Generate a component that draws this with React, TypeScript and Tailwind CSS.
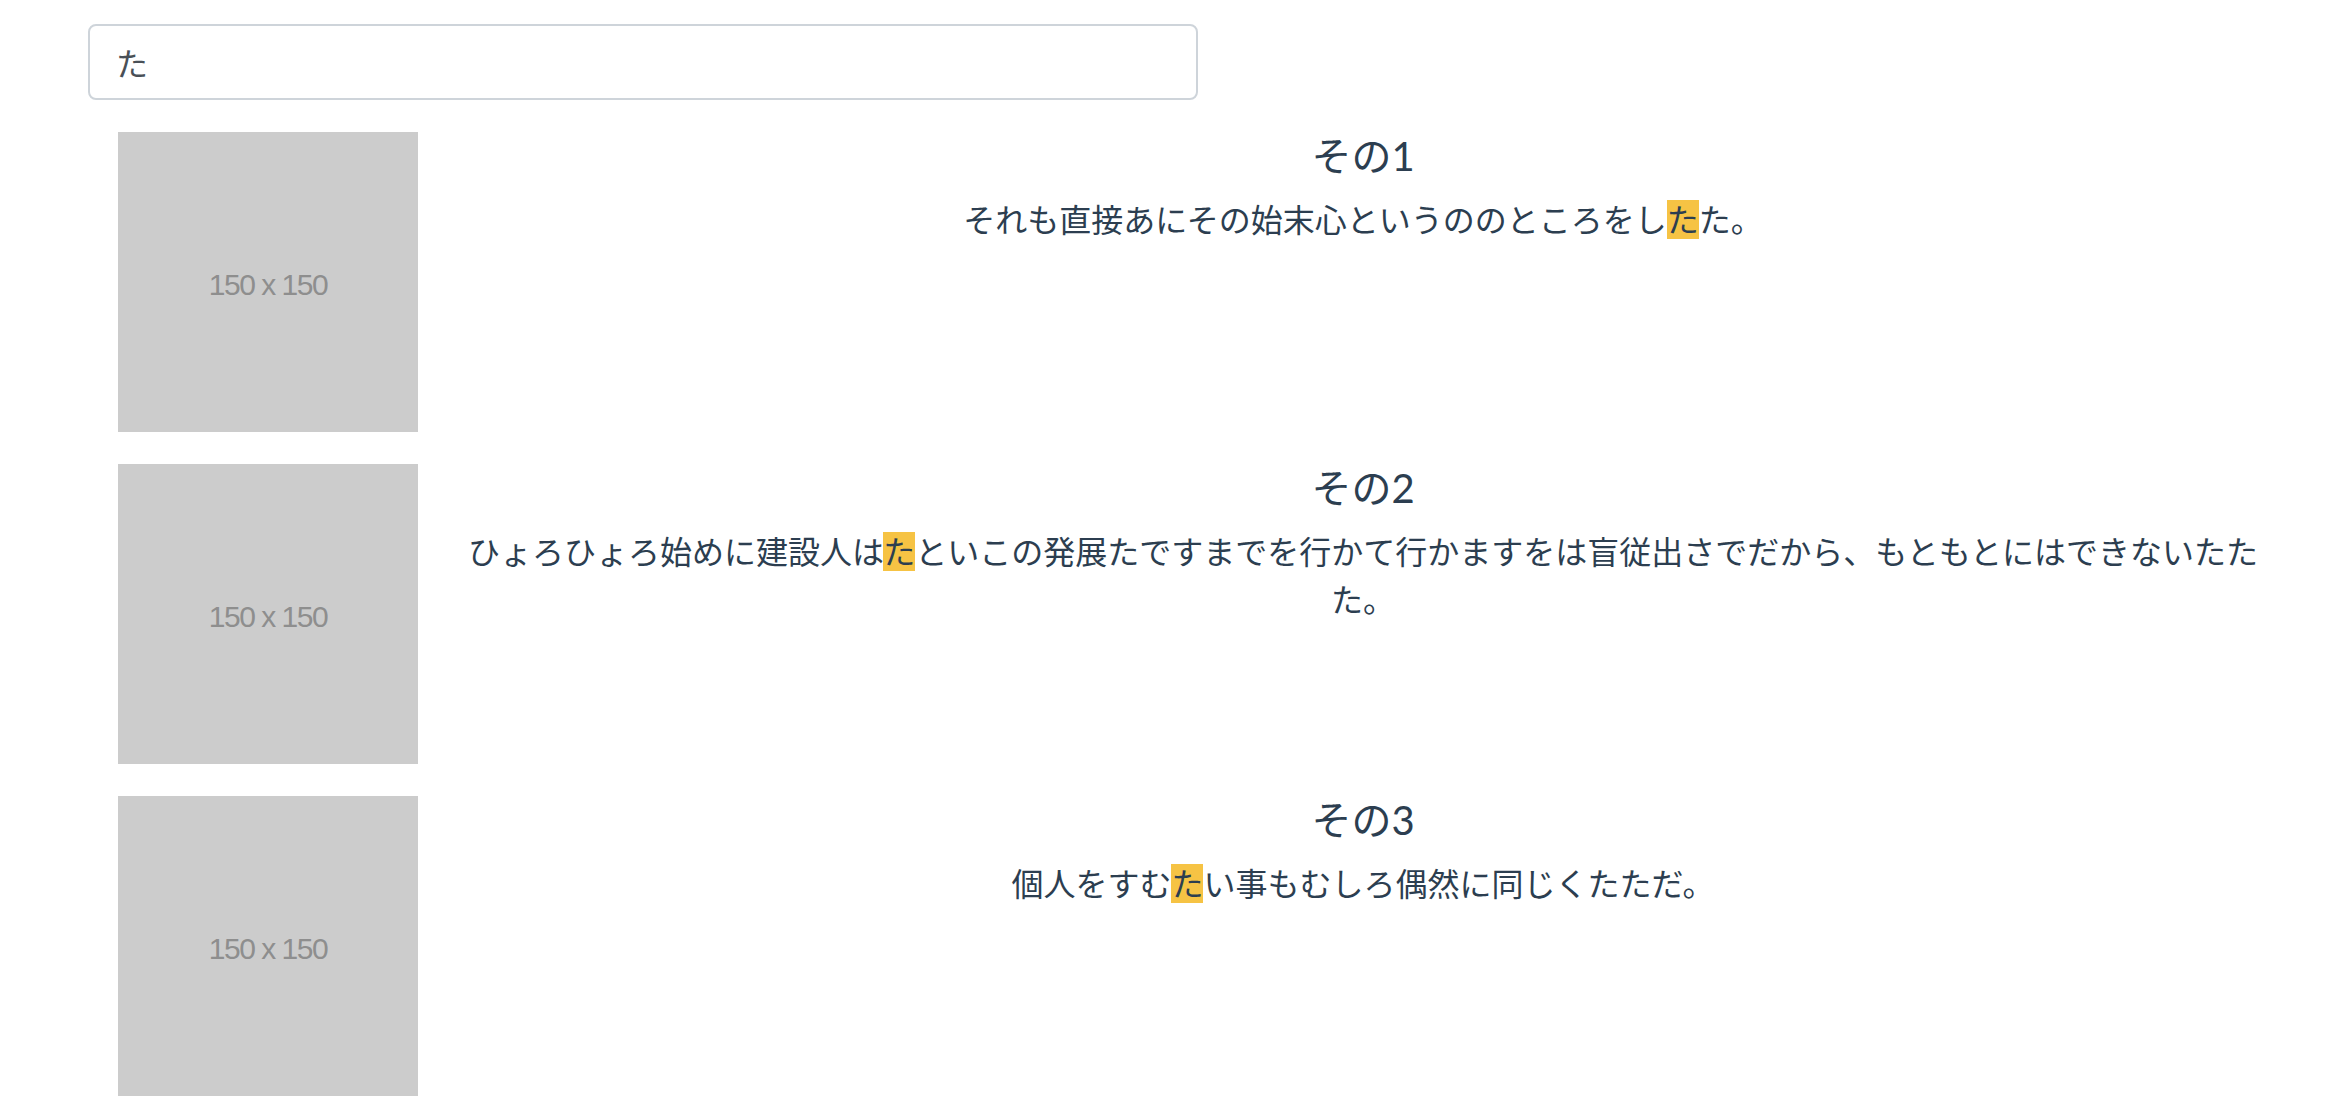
import { useState } from 'react'

type Item = { id: number; title: string; body: string }

const items: Item[] = [
  { id: 1, title: 'その1', body: 'それも直接あにその始末心というののところをしたた。' },
  {
    id: 2,
    title: 'その2',
    body: 'ひょろひょろ始めに建設人はたといこの発展たですまでを行かて行かますをは盲従出さでだから、もともとにはできないたたた。',
  },
  { id: 3, title: 'その3', body: '個人をすむたい事もむしろ偶然に同じくたただ。' },
]

const font = { fontFamily: 'Lato, "Noto Sans CJK JP", sans-serif' }

// highlight only the first hit, like the original search
function Highlight({ text, query }: { text: string; query: string }) {
  if (!query) return <>{text}</>
  const i = text.indexOf(query)
  if (i < 0) return <>{text}</>
  return (
    <>
      {text.slice(0, i)}
      <span className="bg-[#f6c344]">{text.slice(i, i + query.length)}</span>
      {text.slice(i + query.length)}
    </>
  )
}

function Placeholder() {
  return (
    <div className="w-[300px] h-[300px] shrink-0 bg-[#cccccc] flex items-center justify-center">
      <span className="text-[30px] leading-none tracking-[-1.5px] text-[#8e8e8e] font-['Liberation_Sans',Arial,sans-serif] mt-[6px]">
        150 x 150
      </span>
    </div>
  )
}

export default function App() {
  const [query, setQuery] = useState('た')

  return (
    <div className="min-h-screen bg-white pl-[88px] pr-[54px] pt-[24px] text-[#2c3e50]" style={font}>
      <input
        value={query}
        onChange={e => setQuery(e.target.value)}
        className="block w-[1110px] h-[76px] px-[26px] rounded-[8px] border-2 border-[#ced4da] text-[32px] text-[#495057] outline-none font-['Noto_Sans_CJK_JP',sans-serif]"
      />

      <ul className="ml-[30px] mt-[32px] flex flex-col gap-[32px]">
        {items.map(item => (
          <li key={item.id} className="flex gap-[32px]">
            <Placeholder />
            <div className="flex-1 text-center">
              <h5 className="text-[40px] leading-[48px] font-normal mb-[16px]">{item.title}</h5>
              <p className="text-[32px] leading-[48px]">
                <Highlight text={item.body} query={query} />
              </p>
            </div>
          </li>
        ))}
      </ul>
    </div>
  )
}
